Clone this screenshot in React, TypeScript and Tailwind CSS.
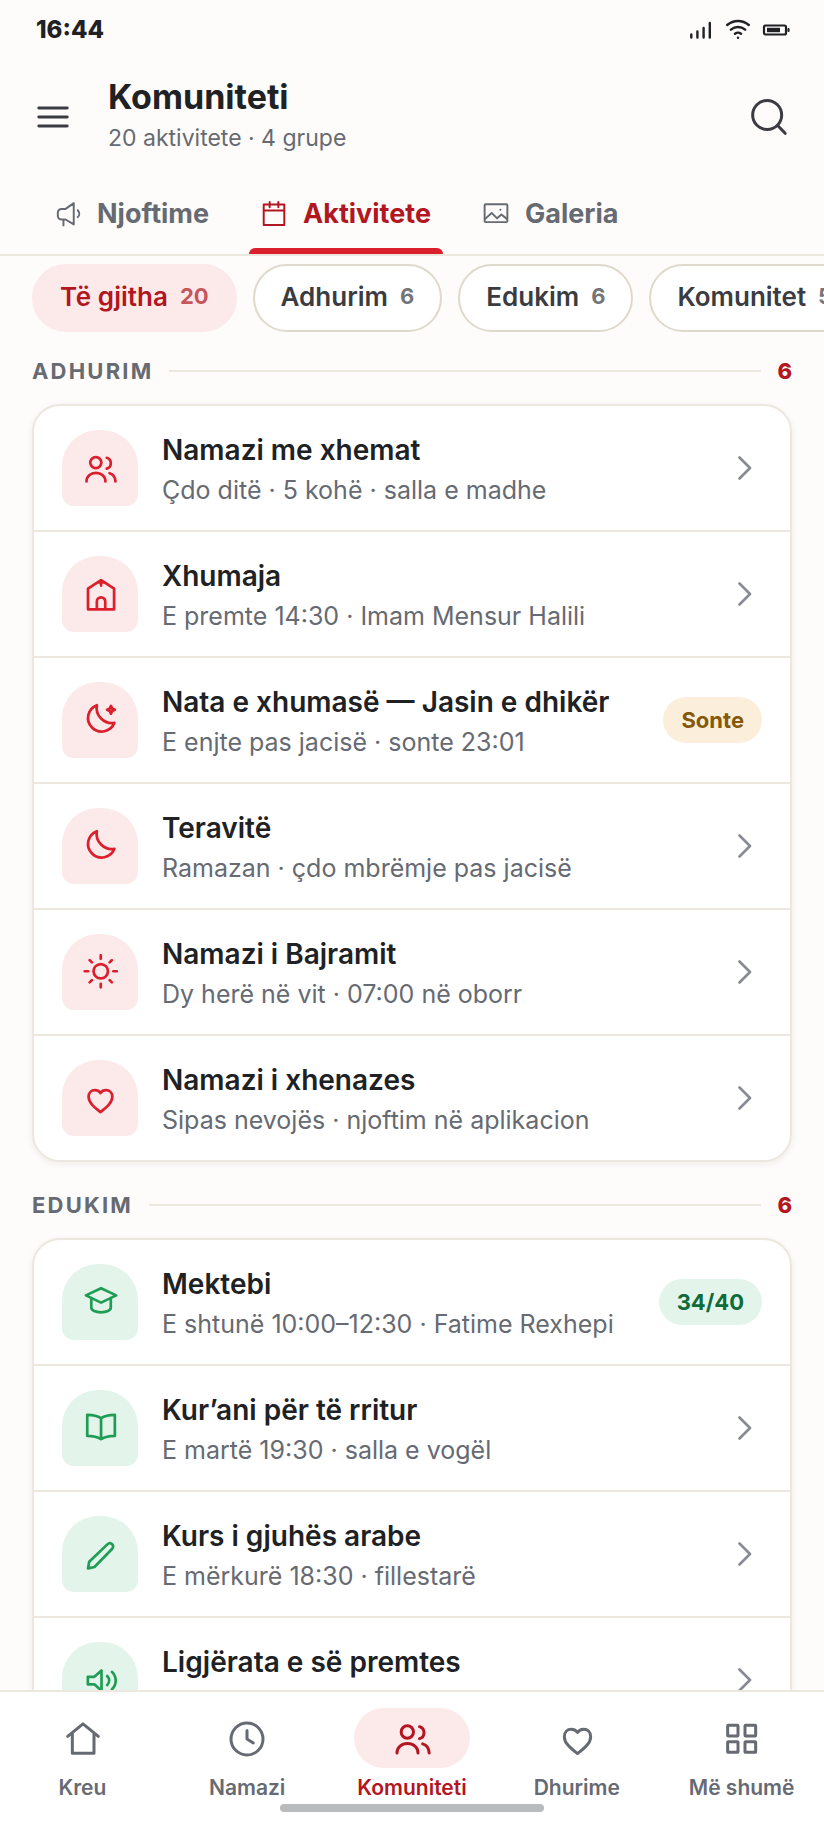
import { useState } from 'react'
import type { ReactNode } from 'react'

type Tone = 'red' | 'green';

interface Activity {
  icon: keyof typeof paths;
  title: string;
  detail?: string;
  badge?: { text: string; className: string };
}

interface Group {
  name: string;
  count: number;
  tone: Tone;
  items: Activity[];
}

const paths = {
  users: (
    <>
      <circle cx="9.2" cy="8.4" r="3.7" />
      <path d="M3 21c0-3.5 2.7-5.7 6.3-5.7s6.3 2.2 6.3 5.7" />
      <path d="M16.5 5.2c1.7.5 2.7 1.8 2.7 3.6s-1 3.1-2.7 3.6M18.4 15.5c2.4.7 3.8 2.7 3.9 5.5" />
    </>
  ),
  mosque: (
    <>
      <path d="M4 22.2V8.4l8.7-5.7 8.7 5.7v13.8zM12.7 2.9v3.5M11.2 4.3h3" />
      <path d="M9.9 22v-5a2.8 2.8 0 0 1 5.6 0v5" />
    </>
  ),
  moonStar: (
    <>
      <path d="M21.6 13.9A9.1 9.1 0 1 1 9.9 2.1a10.2 10.2 0 0 0 11.7 11.8z" />
      <path d="M19.3 2.6l.8 1.8 1.8.8-1.8.8-.8 1.8-.8-1.8-1.8-.8 1.8-.8z" />
    </>
  ),
  moon: <path d="M21.6 13.9A9.1 9.1 0 1 1 9.9 2.1a10.2 10.2 0 0 0 11.7 11.8z" />,
  sun: (
    <>
      <circle cx="12.5" cy="11.5" r="4.8" />
      <path d="M12.5.8v2.3M12.5 19.9v2.3M1.8 11.5h2.3M20.9 11.5h2.3M5.1 4.1l1.5 1.5M18.4 17.4l1.5 1.5M5.1 18.9l1.5-1.5M18.4 5.6l1.5-1.5" />
    </>
  ),
  heart: (
    <path d="M12.3 21.4C7.8 17.9 4.4 15 4.4 11.2c0-2.6 1.8-4.4 4.2-4.4 1.6 0 2.9.7 3.7 1.9.8-1.2 2.1-1.9 3.7-1.9 2.4 0 4.2 1.8 4.2 4.4 0 3.8-3.4 6.7-7.9 10.2z" />
  ),
  cap: (
    <>
      <path d="M2.6 7.6l10.1-4.8 10.1 4.8-10.1 4.8z" />
      <path d="M6.2 9.4v6.3c0 2 2.9 3.2 6.5 3.2s6.5-1.2 6.5-3.2V9.4" />
    </>
  ),
  book: (
    <path d="M12.7 5.4C10 3.6 6.9 3.2 3.5 3.2v14.1c3.4 0 6.5.4 9.2 2.2 2.7-1.8 5.8-2.2 9.2-2.2V3.2c-3.4 0-6.5.4-9.2 2.2zM12.7 5.4v14" />
  ),
  pen: <path d="M4 21.6l.8-4.4L16.9 5.6c1-1 2.3-1 3.2-.1s.9 2.2-.1 3.2L8.3 20.7z" />,
  speaker: (
    <>
      <path d="M3.9 9.9h4.3l4.8-4.2v13.4l-4.8-4.2H3.9z" />
      <path d="M16.8 9.3c1.7 1.8 1.7 4.3 0 6.1M20 6.6c3.3 3.3 3.3 8.3 0 11.6" />
    </>
  ),
  home: <path d="M3.4 11l9.2-7.5 9.2 7.5M6.2 9.3v11.9h13V9.3" />,
  clock: (
    <>
      <circle cx="12" cy="12.6" r="9.6" />
      <path d="M12 7.5v5.1l3.8 2.4" />
    </>
  ),
  grid: (
    <>
      <rect x="3.4" y="4.4" width="6.2" height="6.4" rx=".4" />
      <rect x="13.8" y="4.4" width="6.4" height="6.4" rx=".4" />
      <rect x="3.4" y="14.2" width="6.2" height="6.4" rx=".4" />
      <rect x="13.8" y="14.2" width="6.4" height="6.4" rx=".4" />
    </>
  ),
  chevron: <path d="M9 5l7 7-7 7" />,
  menu: <path d="M3 6.3h18M3 12h18M3 17.7h18" />,
  search: (
    <>
      <circle cx="11.5" cy="10.8" r="8.7" />
      <path d="M17.8 17.1l4.5 4.7" />
    </>
  ),
  megaphone: (
    <>
      <path d="M17.3 2v19.6l-7.5-4.5H6a3.4 3.4 0 0 1-3.4-3.4v-3A3.4 3.4 0 0 1 6 7.3h3.8zM7.8 17.5v5" />
      <path d="M21 8.5c1.8 1.8 1.8 4.6 0 6.4" />
    </>
  ),
  calendar: <path d="M2.5 3.3h19v18.8h-19zM2.5 8.8h19M8 1v4.7M16 1v4.7" />,
  image: (
    <>
      <rect x="1.5" y="3" width="21" height="16.5" rx="1" />
      <path d="M2 16.5L8 11l5 5 4-3.5 5 4M16 8.1h.1" />
    </>
  ),
};

const groups: Group[] = [
  {
    name: 'Adhurim',
    count: 6,
    tone: 'red',
    items: [
      { icon: 'users', title: 'Namazi me xhemat', detail: 'Çdo ditë · 5 kohë · salla e madhe' },
      { icon: 'mosque', title: 'Xhumaja', detail: 'E premte 14:30 · Imam Mensur Halili' },
      {
        icon: 'moonStar',
        title: 'Nata e xhumasë — Jasin e dhikër',
        detail: 'E enjte pas jacisë · sonte 23:01',
        badge: { text: 'Sonte', className: 'bg-[#fbefdc] text-[#85590a]' },
      },
      { icon: 'moon', title: 'Teravitë', detail: 'Ramazan · çdo mbrëmje pas jacisë' },
      { icon: 'sun', title: 'Namazi i Bajramit', detail: 'Dy herë në vit · 07:00 në oborr' },
      { icon: 'heart', title: 'Namazi i xhenazes', detail: 'Sipas nevojës · njoftim në aplikacion' },
    ],
  },
  {
    name: 'Edukim',
    count: 6,
    tone: 'green',
    items: [
      {
        icon: 'cap',
        title: 'Mektebi',
        detail: 'E shtunë 10:00–12:30 · Fatime Rexhepi',
        badge: { text: '34/40', className: 'bg-[#e3f4ea] text-[#0f6b3a]' },
      },
      { icon: 'book', title: 'Kur’ani për të rritur', detail: 'E martë 19:30 · salla e vogël' },
      { icon: 'pen', title: 'Kurs i gjuhës arabe', detail: 'E mërkurë 18:30 · fillestarë' },
      { icon: 'speaker', title: 'Ligjërata e së premtes' },
    ],
  },
];

const filters = [
  { label: 'Të gjitha', count: 20 },
  { label: 'Adhurim', count: 6 },
  { label: 'Edukim', count: 6 },
  { label: 'Komunitet', count: 5 },
];

const tabs: { label: string; icon: keyof typeof paths }[] = [
  { label: 'Njoftime', icon: 'megaphone' },
  { label: 'Aktivitete', icon: 'calendar' },
  { label: 'Galeria', icon: 'image' },
];

const navItems: { label: string; icon: keyof typeof paths }[] = [
  { label: 'Kreu', icon: 'home' },
  { label: 'Namazi', icon: 'clock' },
  { label: 'Komuniteti', icon: 'users' },
  { label: 'Dhurime', icon: 'heart' },
  { label: 'Më shumë', icon: 'grid' },
];

function Icon({ name, className }: { name: keyof typeof paths; className: string }) {
  return (
    <svg
      viewBox="0 0 24 24"
      fill="none"
      stroke="currentColor"
      strokeWidth="1.8"
      strokeLinecap="round"
      strokeLinejoin="round"
      className={`shrink-0 ${className}`}
      aria-hidden="true"
    >
      {paths[name]}
    </svg>
  );
}

function StatusBar() {
  return (
    <div className="flex h-[60px] shrink-0 items-center justify-between pr-[34px] pl-9 text-[#202124]">
      <span className="text-2xl font-extrabold">16:44</span>
      <div className="flex items-center gap-3" aria-hidden="true">
        <svg className="h-6 w-6" viewBox="0 0 24 24" stroke="currentColor" strokeWidth="2.4" strokeLinecap="round">
          <path d="M1.3 16.5v3M7.4 13.5v6M13.6 10v9.5M19.8 5v14.5" />
        </svg>
        <svg className="h-6 w-6" viewBox="0 0 24 24" fill="none" stroke="currentColor" strokeWidth="2.4" strokeLinecap="round">
          <path d="M1.2 7c6.4-5.4 15.2-5.4 21.6 0M4.9 11.7c4.2-3.6 10-3.6 14.2 0M9 15.8c1.8-1.4 4.2-1.4 6 0M12 19.8h.01" />
        </svg>
        <svg className="h-6 w-7" viewBox="0 0 28 24" fill="none" stroke="currentColor" strokeWidth="2.2" strokeLinecap="round">
          <rect x="2" y="7.5" width="22" height="9" rx="1.5" />
          <rect x="5" y="9.8" width="13" height="4.4" fill="currentColor" stroke="none" />
          <path d="M26.5 11v2" />
        </svg>
      </div>
    </div>
  );
}

function SectionHeading({ name, count }: { name: string; count: number }) {
  return (
    <div className="mb-[18px] flex h-[30px] items-center gap-4">
      <h2 className="text-[22px] font-bold tracking-widest text-[#666a72] uppercase">{name}</h2>
      <div className="h-[2px] flex-1 bg-[#ece7df]" />
      <span className="text-[22px] font-extrabold text-[#b11621]">{count}</span>
    </div>
  );
}

function ActivityRow({ item, tone }: { item: Activity; tone: Tone }) {
  const tile = tone === 'red' ? 'bg-[#fce9ea] text-[#dc1f2c]' : 'bg-[#e3f4ea] text-[#1f9d55]';

  return (
    <li className="border-b-2 border-[#ece7df] last:border-b-0">
      <button type="button" className="flex w-full items-center gap-6 px-7 py-6 text-left">
        <span className={`flex h-[76px] w-[76px] shrink-0 items-center justify-center rounded-t-[36px] rounded-b-xl ${tile}`}>
          <Icon name={item.icon} className="h-9 w-9" />
        </span>
        <span className="flex h-[76px] min-w-0 flex-1 flex-col gap-1">
          <span className="truncate text-[28px] leading-10 font-semibold text-[#202124]">{item.title}</span>
          {item.detail && <span className="truncate text-[25px] leading-8 text-[#666a72]">{item.detail}</span>}
        </span>
        {item.badge ? (
          <span className={`rounded-full px-[18px] py-2 text-[22px] leading-[30px] font-bold ${item.badge.className}`}>
            {item.badge.text}
          </span>
        ) : (
          <Icon name="chevron" className="h-9 w-9 text-[#888b93]" />
        )}
      </button>
    </li>
  );
}

function Card({ children }: { children: ReactNode }) {
  return (
    <ul className="overflow-hidden rounded-[28px] border-2 border-[#ece7df] bg-white shadow-[0_2px_6px_rgba(80,50,30,0.08)]">
      {children}
    </ul>
  );
}

export default function App() {
  const [activeTab, setActiveTab] = useState('Aktivitete');
  const [activeFilter, setActiveFilter] = useState('Të gjitha');
  const [activeNav, setActiveNav] = useState('Komuniteti');

  return (
    <div className="flex h-screen flex-col overflow-hidden bg-[#fdfcfa] font-['Inter',sans-serif]">
      <StatusBar />

      <header className="flex h-[114px] shrink-0 items-center pr-9 pl-[34px]">
        <button type="button" aria-label="Menu" className="text-[#3a3c42]">
          <Icon name="menu" className="h-[38px] w-[38px]" />
        </button>
        <div className="ml-9 flex-1">
          <h1 className="text-[34px] leading-[42px] font-bold text-[#202124]">Komuniteti</h1>
          <p className="text-[23px] leading-10 text-[#666a72]">20 aktivitete · 4 grupe</p>
        </div>
        <button type="button" aria-label="Kërko" className="text-[#3a3c42]">
          <Icon name="search" className="h-10 w-10" />
        </button>
      </header>

      <nav className="flex h-[82px] shrink-0 gap-7 border-b-2 border-[#ece7df] pl-[43px]">
        {tabs.map((tab) => {
          const active = tab.label === activeTab;
          return (
            <button
              key={tab.label}
              type="button"
              onClick={() => setActiveTab(tab.label)}
              className={`relative flex items-center gap-4 px-3 text-[27px] font-bold ${active ? 'text-[#b11621]' : 'text-[#666a72]'}`}
            >
              <Icon name={tab.icon} className="h-[26px] w-[26px]" />
              {tab.label}
              {active && <span className="absolute inset-x-0 bottom-0 h-[6px] rounded-t-md bg-[#dc1f2c]" />}
            </button>
          );
        })}
      </nav>

      <main className="min-h-0 flex-1 overflow-hidden px-8 pt-2">
        <div className="-mr-8 flex gap-4 overflow-x-auto [scrollbar-width:none]">
          {filters.map((filter) => {
            const active = filter.label === activeFilter;
            return (
              <button
                key={filter.label}
                type="button"
                onClick={() => setActiveFilter(filter.label)}
                className={`flex h-[68px] shrink-0 items-center gap-3 rounded-full border-2 px-[26px] pb-[3px] text-[26px] font-semibold ${
                  active ? 'border-[#fce9ea] bg-[#fce9ea] text-[#b11621]' : 'border-[#dfd9cc] bg-white text-[#3a3c42]'
                }`}
              >
                {filter.label}
                <span className="text-[22px] font-bold opacity-70">{filter.count}</span>
              </button>
            );
          })}
        </div>

        {groups.map((group) => (
          <section key={group.name} className="mt-7 first-of-type:mt-6">
            <SectionHeading name={group.name} count={group.count} />
            <Card>
              {group.items.map((item) => (
                <ActivityRow key={item.title} item={item} tone={group.tone} />
              ))}
            </Card>
          </section>
        ))}
      </main>

      <footer className="shrink-0 border-t-2 border-[#ece7df] bg-white pt-4 pb-[18px]">
        <nav className="grid grid-cols-5">
          {navItems.map((item) => {
            const active = item.label === activeNav;
            return (
              <button
                key={item.label}
                type="button"
                onClick={() => setActiveNav(item.label)}
                className={`flex flex-col items-center gap-1 ${active ? 'text-[#b11621]' : 'text-[#666a72]'}`}
              >
                <span className={`flex h-[60px] w-[116px] items-center justify-center rounded-full ${active ? 'bg-[#fce9ea]' : ''}`}>
                  <Icon name={item.icon} className="h-10 w-10" />
                </span>
                <span className="text-[21px] leading-8 font-semibold">{item.label}</span>
              </button>
            );
          })}
        </nav>
        <div className="mx-auto h-2 w-[264px] rounded-full bg-[#b9bbbd]" />
      </footer>
    </div>
  );
}
